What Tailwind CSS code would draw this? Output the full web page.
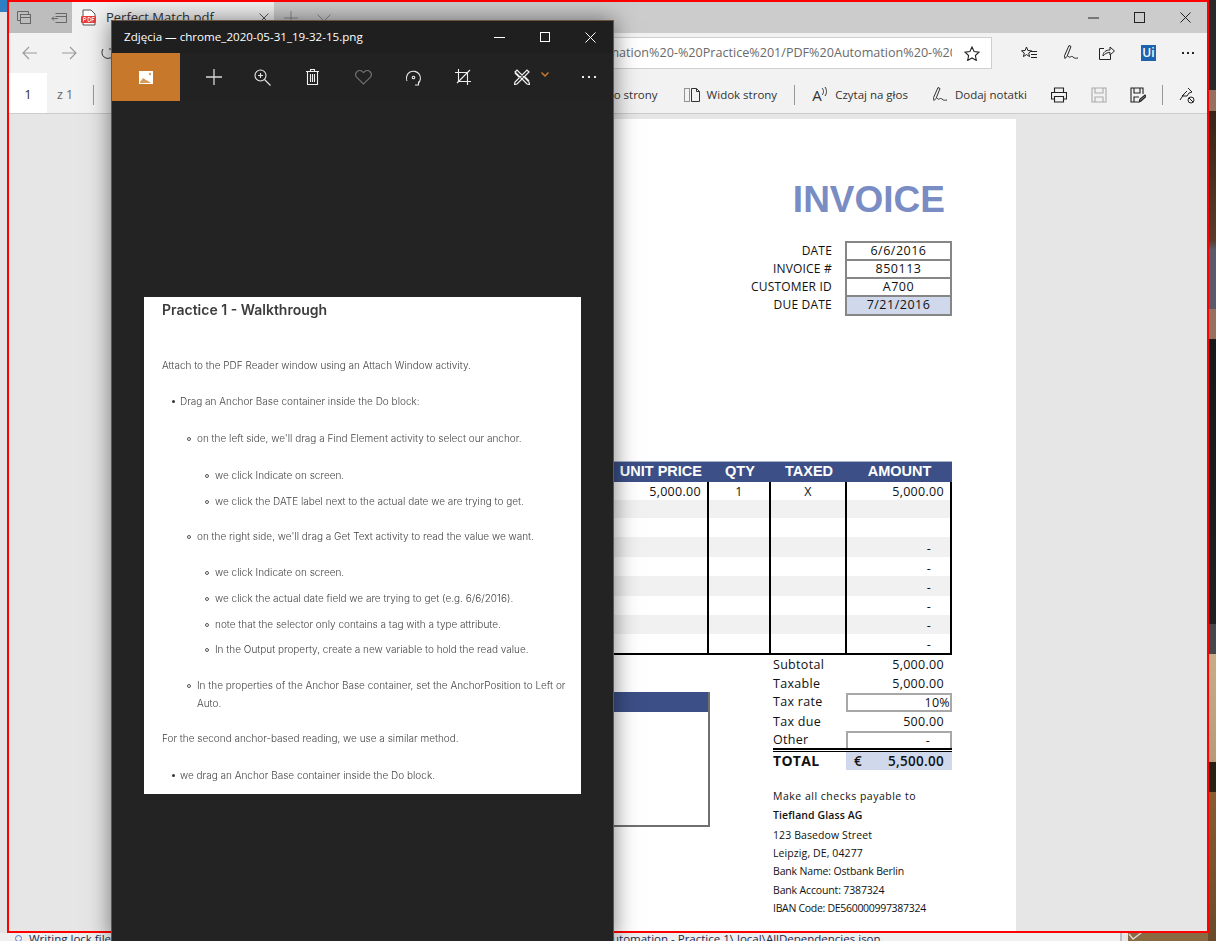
<!DOCTYPE html>
<html lang="pl">
<head>
    <meta charset="UTF-8">
    <title>Perfect Match.pdf</title>
    <script src="https://cdn.jsdelivr.net/npm/@tailwindcss/browser@4"></script>
</head>
<body class="relative w-[1216px] h-[941px] overflow-hidden bg-[#e4e4e4] font-['Open_Sans',sans-serif]">

    <!-- desktop behind the windows -->
    <div class="absolute left-0 top-0 w-[7px] h-[12px] bg-[#2f7fc4]"></div>
    <div class="absolute right-0 top-0 w-[8px] h-[941px] bg-[linear-gradient(#2a2a2c_0,#2a2a2c_90px,#98705e_90px,#98705e_111px,#3a2418_111px,#5a3a28_240px,#5a5a6c_250px,#5a5a6c_309px,#98705e_309px,#98705e_339px,#18181a_339px,#202022_624px,#45474a_624px,#45474a_654px,#c8ac88_654px,#b89a78_762px,#2a2014_762px,#2a2014_792px,#8a5a30_792px,#6a4a2a_941px)]"></div>
    <div class="absolute left-0 top-[933px] w-[1120px] h-[8px] overflow-hidden bg-[#efefef] text-[11.500px] leading-[13px] text-[#1a2a50]">
        <i class="absolute left-[15px] top-[2px] w-[7px] h-[7px] rounded-full border border-[#5a78c8]"></i>
        <span class="absolute left-[29px] -top-[1px]">Writing lock file</span>
        <span class="absolute left-[612px] -top-[1px] whitespace-nowrap">utomation - Practice 1\.local\AllDependencies.json</span>
    </div>
    <div class="absolute left-[1120px] top-[933px] w-[2px] h-[8px] bg-[#bdbdbd]"></div>
    <div class="absolute left-[1122px] top-[933px] w-[6px] h-[8px] bg-[#e6e6e6]"></div>
    <div class="absolute left-[1128px] top-[933px] w-[80px] h-[8px] bg-[#8a6a40]">
        <svg class="absolute left-0 top-0" width="14" height="8" viewBox="0 0 14 8" fill="none" stroke="#ddd" stroke-width="1.300"><path d="M1 1l4 5 8-6"/></svg>
    </div>

    <!-- Edge window -->
    <div class="absolute left-[7px] top-0 w-[1202px] h-[933px] border-2 border-[#ff0000] flex flex-col bg-[#e6e6e6] overflow-hidden">
        <!-- tabs -->
        <div class="h-[31px] shrink-0 flex bg-[#cccccc]">
            <div class="w-[63px] flex items-center bg-[#bdbdbd] text-[#555]">
                <svg class="ml-[7px]" width="16" height="16" viewBox="0 0 16 16" fill="none" stroke="#666"><path d="M1.500 1.500h11v3M1.500 1.500v9h3"/><rect x="4.500" y="4.500" width="10" height="9"/><path d="M4.500 7.500h10"/></svg>
                <svg class="ml-[19px]" width="16" height="14" viewBox="0 0 16 14" fill="none" stroke="#666"><path d="M4.500 2.500h11v9h-11M4.500 5.500h11M7 7.500H1M3 5.500l-2 2 2 2"/></svg>
            </div>
            <div class="w-[202px] flex items-center bg-[#f2f2f2] text-[13px] text-[#333]">
                <svg class="ml-[9px]" width="15" height="17" viewBox="0 0 15 17"><path d="M2 1h8l4 4v11H2z" fill="#fff" stroke="#555"/><rect x="0" y="7" width="15" height="7" rx="1" fill="#e8403a"/><path d="M2.500 12.500v-4h1.500a1 1 0 010 2h-1.500M7 8.500v4h1a2 2 0 000-4zM11 12.500v-4h2.500M11 10.500h2" stroke="#fff" stroke-width=".8" fill="none"/></svg>
                <span class="ml-[10px]">Perfect Match.pdf</span>
                <svg class="ml-[45px]" width="10" height="10" viewBox="0 0 10 10" stroke="#555"><path d="M.5.500l9 9M9.500.500l-9 9"/></svg>
            </div>
            <svg class="ml-[10px] self-center" width="14" height="14" viewBox="0 0 14 14" stroke="#888"><path d="M7 0v14M0 7h14"/></svg>
            <svg class="ml-[19px] self-center" width="14" height="8" viewBox="0 0 14 8" fill="none" stroke="#888"><path d="M.5.500L7 7l6.500-6.500"/></svg>
            <div class="ml-auto flex items-center">
                <svg width="11" height="2" viewBox="0 0 11 2" stroke="#222"><path d="M0 1h11"/></svg>
                <svg class="ml-[35px]" width="11" height="11" viewBox="0 0 11 11" fill="none" stroke="#222"><rect x=".5" y=".5" width="10" height="10"/></svg>
                <svg class="ml-[35px] mr-[16px]" width="11" height="11" viewBox="0 0 11 11" stroke="#222"><path d="M.5.500l10 10M10.500.500l-10 10"/></svg>
            </div>
        </div>
        <!-- address bar -->
        <div class="h-[40px] shrink-0 flex items-center bg-[#f2f2f2] relative">
            <svg class="ml-[13px]" width="15" height="14" viewBox="0 0 15 14" fill="none" stroke="#999" stroke-width="1.100"><path d="M15 7H1M7 1L1 7l6 6"/></svg>
            <svg class="ml-[25px]" width="15" height="14" viewBox="0 0 15 14" fill="none" stroke="#999" stroke-width="1.100"><path d="M0 7h14M8 1l6 6-6 6"/></svg>
            <svg class="ml-[24px]" width="14" height="14" viewBox="0 0 14 14" fill="none" stroke="#333"><path d="M2 3a6 6 0 109-1M11 0v3H8"/></svg>
            <div class="ml-[4px] w-[873px] h-[32px] bg-white border border-[#cfcfcf] flex items-center pr-[39px] relative">
                <div class="flex-1 flex justify-end overflow-hidden">
                    <span class="whitespace-nowrap text-[12.600px] text-[#6a6a6a] -mr-[5px]">PDF%20Automation%20-%20Practice%201/PDF%20Automation%20-%20</span>
                </div>
                <svg class="absolute right-[11px] top-[8px]" width="16" height="15" viewBox="0 0 16 15" fill="none" stroke="#222" stroke-width="1.100"><path d="M8 1l2.100 4.500 4.900.6-3.600 3.400.9 4.900L8 11.900l-4.300 2.500.9-4.900L1 6.100l4.900-.6z"/></svg>
            </div>
            <svg class="ml-[29px]" width="16" height="14" viewBox="0 0 16 14" fill="none" stroke="#222"><path d="M5.500 1l1.400 3.500 3.600.3-2.800 2.300.9 3.500-3.100-2-3.100 2 .9-3.500L.5 4.800l3.600-.3zM10 5.500h6M10 8.500h6M10 11.500h6"/></svg>
            <svg class="ml-[26px]" width="16" height="16" viewBox="0 0 16 16" fill="none" stroke="#222"><path d="M6 .5l2 1-4 10-2 2-.5-2.800zM5 11c2 3 3-1 5 1s3 1 5 1"/></svg>
            <svg class="ml-[20px]" width="16" height="14" viewBox="0 0 16 14" fill="none" stroke="#222"><path d="M5 2.500H.5v11h11V9M4 10c0-4 3-6 7-6V1l4.500 4L11 9V6.500c-3 0-5 1-7 3.500z"/></svg>
            <div class="ml-[26px] w-[15px] h-[16px] bg-[#1c64ae] text-white text-[12px] font-semibold leading-[16px] text-center">Ui</div>
            <div class="ml-[26px] flex gap-[3px]"><i class="w-[2px] h-[2px] bg-[#222]"></i><i class="w-[2px] h-[2px] bg-[#222]"></i><i class="w-[2px] h-[2px] bg-[#222]"></i></div>
        </div>
        <!-- pdf toolbar -->
        <div class="h-[41px] shrink-0 flex items-center justify-end bg-[#f2f2f2] border-b border-[#cccccc] pt-[4px] text-[11.500px] text-[#333] relative">
            <div class="absolute left-0 top-0 h-[40px] flex items-center">
                <div class="w-[38px] h-[40px] pt-[4px] bg-white flex items-center justify-center text-[13px]">1</div>
                <span class="ml-[10px] mt-[4px] text-[12.500px] text-[#666]">z 1</span>
                <i class="ml-[20px] mt-[4px] w-px h-[20px] bg-[#999]"></i>
            </div>
            <span class="whitespace-nowrap">Dopasuj do strony</span>
            <svg class="ml-[26px]" width="16" height="16" viewBox="0 0 16 16" fill="none" stroke="#333"><path d="M.5 1.500h5v13h-5z" stroke-dasharray="1 1"/><path d="M7.500 1.500h5l3 3v10h-8zM12.500 1.500v3h3"/></svg>
            <span class="ml-[7px]">Widok strony</span>
            <i class="ml-[17px] w-px h-[20px] bg-[#999]"></i>
            <span class="ml-[17px] flex items-start w-[16px] text-[15px] leading-[16px]">A<svg class="-ml-px" width="6" height="9" viewBox="0 0 6 9" fill="none" stroke="#333"><path d="M1 1c2 2 2 5 0 7M4 0c2 3 2 6 0 9"/></svg></span>
            <span class="ml-[7px]">Czytaj na głos</span>
            <svg class="ml-[24px]" width="16" height="16" viewBox="0 0 16 16" fill="none" stroke="#333"><path d="M6 .5l2 1-4 10-2 2-.5-2.800zM5 11c2 3 3-1 5 1s3 1 5 1"/></svg>
            <span class="ml-[7px]">Dodaj notatki</span>
            <svg class="ml-[24px]" width="16" height="16" viewBox="0 0 16 16" fill="none" stroke="#222" stroke-width="1.100"><path d="M3.500 5V1h9v4M3.500 12H.5V5.500h15V12h-3M3.500 9.500h9v5.500h-9z"/></svg>
            <svg class="ml-[24px]" width="16" height="16" viewBox="0 0 16 16" fill="none" stroke="#aaa" stroke-width="1.100"><path d="M1 1h14v14H1zM4 1v5h8V1M4 15v-5h8v5"/></svg>
            <svg class="ml-[23px]" width="16" height="16" viewBox="0 0 16 16" fill="none" stroke="#222" stroke-width="1.100"><path d="M8 15H1V1h12v6M4 1v5h6V1M4 15v-5h5"/><path d="M9 15l1-3 5-4 1 1.500-5 4.500z" fill="#888"/></svg>
            <i class="ml-[16px] w-px h-[20px] bg-[#999]"></i>
            <svg class="ml-[16px] mr-[12px]" width="16" height="17" viewBox="0 0 16 17" fill="none" stroke="#222"><path d="M9 1l4 4-3 1-2 3H3l2-2-4 6M5 7l3-3z"/><circle cx="12" cy="13" r="3"/><path d="M10 11l4 4"/></svg>
        </div>
        <!-- pdf viewport -->
        <div class="flex-1 flex justify-center items-start pt-[5px] overflow-hidden">
            <div class="w-[816px] h-[900px] shrink-0 bg-white pr-[64px] flex flex-col items-end text-[12.500px] leading-[18px] text-[#111] tracking-[0.3px]">
                <div class="mt-[60px] mr-[7px] font-['Liberation_Sans',sans-serif] font-bold text-[37px] leading-[42px] tracking-normal text-[#7a8cc4]">INVOICE</div>

                <div class="mt-[20px] grid grid-cols-[auto_107px] gap-x-[13px]">
                    <div class="flex flex-col text-right text-[12px] tracking-[0.2px]">
                        <span class="h-[18px] mt-px">DATE</span>
                        <span class="h-[18px]">INVOICE #</span>
                        <span class="h-[18px]">CUSTOMER ID</span>
                        <span class="h-[18px]">DUE DATE</span>
                    </div>
                    <div class="border-2 border-[#868686] flex flex-col text-center tracking-[0.5px]">
                        <span class="h-[18px] border-b-2 border-[#868686] leading-[16px]">6/6/2016</span>
                        <span class="h-[18px] border-b-2 border-[#868686] leading-[16px]">850113</span>
                        <span class="h-[18px] border-b-2 border-[#868686] leading-[16px]">A700</span>
                        <span class="h-[17px] bg-[#d0d8ec] leading-[16px]">7/21/2016</span>
                    </div>
                </div>

                <!-- items table -->
                <div class="mt-[145px] w-[551px]">
                    <div class="h-[21px] grid grid-cols-[308px_62px_76px_105px] bg-[#3c4f86] border-t border-[#a9b1c9] text-white font-['Liberation_Sans',sans-serif] font-bold text-[14.500px] leading-[18px] tracking-normal text-center">
                        <span class="text-right pr-[7px]">UNIT PRICE</span><span>QTY</span><span>TAXED</span><span>AMOUNT</span>
                    </div>
                    <div class="grid grid-cols-[308px_62px_76px_105px] border-b-2 border-black">
                        <div class="flex flex-col border-r-2 border-black text-right">
                            <span class="h-[18px] pr-[6px] leading-[20px]">5,000.00</span><i class="h-[18px] bg-[#f1f1f1]"></i><i class="h-[19px]"></i><i class="h-[20px] bg-[#f1f1f1]"></i><i class="h-[19px]"></i><i class="h-[20px] bg-[#f1f1f1]"></i><i class="h-[19px]"></i><i class="h-[19px] bg-[#f1f1f1]"></i><i class="h-[19px]"></i>
                        </div>
                        <div class="flex flex-col border-r-2 border-black text-center">
                            <span class="h-[18px] leading-[20px]">1</span><i class="h-[18px] bg-[#f1f1f1]"></i><i class="h-[19px]"></i><i class="h-[20px] bg-[#f1f1f1]"></i><i class="h-[19px]"></i><i class="h-[20px] bg-[#f1f1f1]"></i><i class="h-[19px]"></i><i class="h-[19px] bg-[#f1f1f1]"></i><i class="h-[19px]"></i>
                        </div>
                        <div class="flex flex-col border-r-2 border-black text-center">
                            <span class="h-[18px] leading-[20px]">X</span><i class="h-[18px] bg-[#f1f1f1]"></i><i class="h-[19px]"></i><i class="h-[20px] bg-[#f1f1f1]"></i><i class="h-[19px]"></i><i class="h-[20px] bg-[#f1f1f1]"></i><i class="h-[19px]"></i><i class="h-[19px] bg-[#f1f1f1]"></i><i class="h-[19px]"></i>
                        </div>
                        <div class="flex flex-col border-r-2 border-black text-right">
                            <span class="h-[18px] pr-[6px] leading-[20px]">5,000.00</span><i class="h-[18px] bg-[#f1f1f1]"></i><i class="h-[19px]"></i>
                            <span class="h-[20px] pr-[19px] leading-[24px] bg-[#f1f1f1]">-</span><span class="h-[19px] pr-[19px] leading-[24px]">-</span><span class="h-[20px] pr-[19px] leading-[24px] bg-[#f1f1f1]">-</span><span class="h-[19px] pr-[19px] leading-[22px]">-</span><span class="h-[19px] pr-[19px] leading-[22px] bg-[#f1f1f1]">-</span><span class="h-[19px] pr-[19px] leading-[22px]">-</span>
                        </div>
                    </div>
                </div>

                <!-- totals and bill box -->
                <div class="w-[551px] flex items-start">
                    <div class="mt-[37px] w-[309px] h-[135px] border-r-2 border-b-2 border-[#707070]">
                        <div class="h-[20px] bg-[#3c4f86]"></div>
                    </div>
                    <div class="mt-[2px] ml-[63px] w-[179px]">
                        <div class="grid grid-cols-[73px_106px]">
                            <span class="h-[18px] leading-[16px]">Subtotal</span><span class="h-[18px] leading-[16px] text-right pr-[8px]">5,000.00</span>
                            <span class="h-[18px]">Taxable</span><span class="h-[18px] text-right pr-[8px]">5,000.00</span>
                            <span class="h-[19px]">Tax rate</span><span class="h-[19px] text-right border-2 border-[#a8a8a8] leading-[15px]">10%</span>
                            <span class="h-[19px] leading-[20px]">Tax due</span><span class="h-[19px] leading-[20px] text-right pr-[8px]">500.00</span>
                            <span class="h-[17px]">Other</span><span class="h-[17px] text-right pr-[20px] border-2 border-b-0 border-[#a8a8a8] leading-[15px]">-</span>
                        </div>
                        <div class="h-[4px] border-t-2 border-b border-black"></div>
                        <div class="grid grid-cols-[73px_106px] h-[18px]">
                            <span class="font-bold text-[14px]">TOTAL</span>
                            <div class="bg-[#d0d8ec] flex justify-between pl-[8px] pr-[8px] font-semibold text-[13.500px]"><span>€</span><span>5,500.00</span></div>
                        </div>
                        <div class="mt-[17px] text-[10.500px] tracking-[0.1px]">
                            <div class="h-[19px] tracking-[0.5px]">Make all checks payable to</div>
                            <div class="h-[20px] font-semibold">Tiefland Glass AG</div>
                            <div class="h-[18px]">123 Basedow Street</div>
                            <div class="h-[18px]">Leipzig, DE, 04277</div>
                            <div class="h-[19px] tracking-[-0.15px]">Bank Name: Ostbank Berlin</div>
                            <div class="h-[18px] tracking-[-0.15px]">Bank Account: 7387324</div>
                            <div class="h-[18px] tracking-[-0.3px]">IBAN Code: DE560000997387324</div>
                        </div>
                    </div>
                </div>
            </div>
        </div>
    </div>

    <!-- Photos window -->
    <div class="absolute left-[111px] top-[20px] w-[503px] h-[921px] bg-[#232323] border-t border-l border-r border-[#6b5440] shadow-[0_0_22px_rgba(0,0,0,0.5)] flex flex-col">
        <div class="h-[32px] shrink-0 flex items-center bg-[#1f1f1f] text-white text-[11.600px]">
            <span class="ml-[12px]">Zdjęcia — chrome_2020-05-31_19-32-15.png</span>
            <div class="ml-auto flex items-center">
                <svg width="11" height="1" viewBox="0 0 11 1" stroke="#fff"><path d="M0 .5h11"/></svg>
                <svg class="ml-[35px]" width="10" height="10" viewBox="0 0 10 10" fill="none" stroke="#fff"><rect x=".5" y=".5" width="9" height="9"/></svg>
                <svg class="ml-[35px] mr-[17px]" width="11" height="11" viewBox="0 0 11 11" stroke="#fff"><path d="M.5.500l10 10M10.500.500l-10 10"/></svg>
            </div>
        </div>
        <div class="h-[48px] shrink-0 flex items-center bg-[#222222]">
            <div class="w-[68px] h-[48px] bg-[#c8782a] flex items-center justify-center">
                <svg width="14" height="13" viewBox="0 0 14 13"><rect width="14" height="13" fill="#fff"/><path d="M1 11l3-4 3 2 2 1 3 2H1z" fill="#c8782a" opacity=".75"/><circle cx="11" cy="3" r="1.200" fill="#c8782a" opacity=".7"/></svg>
            </div>
            <svg class="ml-[26px]" width="16" height="16" viewBox="0 0 16 16" stroke="#d8d8d8" stroke-width="1.300"><path d="M8 0v16M0 8h16"/></svg>
            <svg class="ml-[32px]" width="17" height="17" viewBox="0 0 17 17" fill="none" stroke="#e8e8e8" stroke-width="1.100"><circle cx="6.500" cy="6.500" r="5.500"/><path d="M4 6.500h5M6.500 4v5M10.500 10.500L16.500 16.500"/></svg>
            <svg class="ml-[35px]" width="13" height="16" viewBox="0 0 13 16" fill="none" stroke="#f0f0f0" stroke-width="1.100"><path d="M0 2.500h13M4.500 2.500V.5h4v2M1.500 2.500v13h10v-13M4.500 5v8M6.500 5v8M8.500 5v8"/></svg>
            <svg class="ml-[36px]" width="17" height="15" viewBox="0 0 17 15" fill="none" stroke="#6e6e6e" stroke-width="1.200"><path d="M8.500 14L1.800 7.300a4 4 0 015.700-5.600l1 1 1-1a4 4 0 015.700 5.600z"/></svg>
            <svg class="ml-[33px]" width="17" height="17" viewBox="0 0 17 17" fill="none" stroke="#e8e8e8" stroke-width="1.100"><path d="M2 12A7 7 0 1113 14.500M10 16h3.500v-3.500" /><circle cx="8.500" cy="8.500" r="1.300"/></svg>
            <svg class="ml-[33px]" width="16" height="16" viewBox="0 0 16 16" fill="none" stroke="#eee" stroke-width="1.100"><path d="M3.500 0v12.500H16M0 3.500h12.500V16M2 14L15 1"/></svg>
            <svg class="ml-[43px]" width="16" height="16" viewBox="0 0 16 16" fill="none" stroke="#f0f0f0" stroke-width="1.200"><path d="M1 3l2-2 12 12 .5 2.500-2.500-.5zM15 3l-2-2L1 13l-.5 2.500 2.500-.5zM5 8L1 4M11 8l4 4"/></svg>
            <svg class="ml-[11px] -mt-[6px]" width="8" height="5" viewBox="0 0 8 5" fill="none" stroke="#c8782a" stroke-width="1.500"><path d="M.5.500L4 4 7.500.500"/></svg>
            <div class="ml-[33px] flex gap-[4px]"><i class="w-[2px] h-[2px] bg-[#eee]"></i><i class="w-[2px] h-[2px] bg-[#eee]"></i><i class="w-[2px] h-[2px] bg-[#eee]"></i></div>
        </div>
        <!-- viewed picture -->
        <div class="ml-[32px] mt-[196px] w-[437px] h-[497px] bg-white pl-[18px] pr-[10px] font-['Inter',sans-serif] font-light text-[10px] leading-[18px] text-[#444]">
            <div class="blur-[0.3px]">
            <h1 class="h-[26px] text-[14px] font-semibold leading-[26px] text-[#3c3c3c]">Practice 1 - Walkthrough</h1>
            <p class="mt-[33px]">Attach to the PDF Reader window using an Attach Window activity.</p>
            <div class="mt-[18px] ml-[18px] relative"><i class="absolute -left-[8px] top-[8px] w-[3px] h-[3px] rounded-full bg-[#333]"></i>Drag an Anchor Base container inside the Do block:</div>
            <div class="mt-[19px] ml-[35px] relative"><i class="absolute -left-[10px] top-[8px] w-[4px] h-[4px] rounded-full border border-[#555]"></i>on the left side, we'll drag a Find Element activity to select our anchor.</div>
            <div class="mt-[19px] ml-[53px] relative"><i class="absolute -left-[10px] top-[8px] w-[4px] h-[4px] rounded-full border border-[#555]"></i>we click Indicate on screen.</div>
            <div class="mt-[8px] ml-[53px] relative"><i class="absolute -left-[10px] top-[8px] w-[4px] h-[4px] rounded-full border border-[#555]"></i>we click the DATE label next to the actual date we are trying to get.</div>
            <div class="mt-[17px] ml-[35px] relative"><i class="absolute -left-[10px] top-[8px] w-[4px] h-[4px] rounded-full border border-[#555]"></i>on the right side, we'll drag a Get Text activity to read the value we want.</div>
            <div class="mt-[18px] ml-[53px] relative"><i class="absolute -left-[10px] top-[8px] w-[4px] h-[4px] rounded-full border border-[#555]"></i>we click Indicate on screen.</div>
            <div class="mt-[8px] ml-[53px] relative"><i class="absolute -left-[10px] top-[8px] w-[4px] h-[4px] rounded-full border border-[#555]"></i>we click the actual date field we are trying to get (e.g. 6/6/2016).</div>
            <div class="mt-[8px] ml-[53px] relative"><i class="absolute -left-[10px] top-[8px] w-[4px] h-[4px] rounded-full border border-[#555]"></i>note that the selector only contains a tag with a type attribute.</div>
            <div class="mt-[7px] ml-[53px] relative"><i class="absolute -left-[10px] top-[8px] w-[4px] h-[4px] rounded-full border border-[#555]"></i>In the Output property, create a new variable to hold the read value.</div>
            <div class="mt-[18px] ml-[35px] relative"><i class="absolute -left-[10px] top-[8px] w-[4px] h-[4px] rounded-full border border-[#555]"></i>In the properties of the Anchor Base container, set the AnchorPosition to Left or Auto.</div>
            <p class="mt-[17px]">For the second anchor-based reading, we use a similar method.</p>
            <div class="mt-[19px] ml-[18px] relative"><i class="absolute -left-[8px] top-[8px] w-[3px] h-[3px] rounded-full bg-[#333]"></i>we drag an Anchor Base container inside the Do block.</div>
            </div>
        </div>
    </div>
</body>
</html>
